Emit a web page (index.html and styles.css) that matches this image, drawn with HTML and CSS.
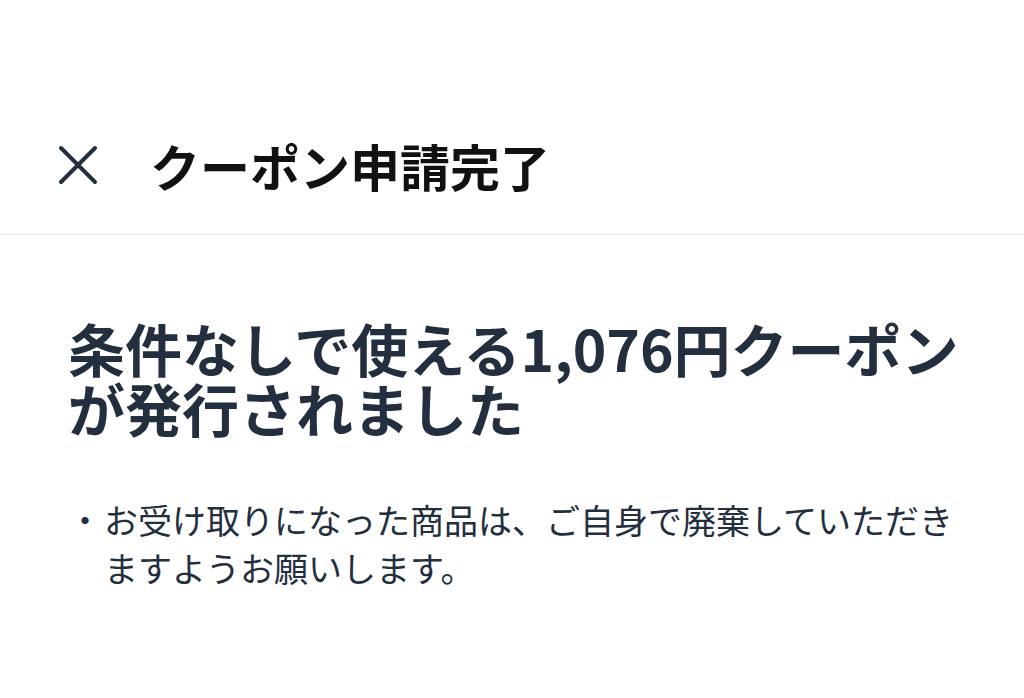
FILE: index.html
```html
<!DOCTYPE html>
<html lang="ja">
<head>
    <meta charset="UTF-8">
    <meta name="viewport" content="width=device-width, initial-scale=1.0">
    <title>クーポン申請完了</title>
    <link rel="stylesheet" href="styles.css">
</head>
<body>

    <header class="top-bar">
        <button class="close-btn" aria-label="閉じる">
            <svg width="40" height="40" viewBox="0 0 40 40">
                <path d="M3 3 L37 37 M37 3 L3 37" stroke="#232f3e" stroke-width="4" stroke-linecap="round" fill="none"/>
            </svg>
        </button>
        <h1 class="title">クーポン申請完了</h1>
    </header>

    <main class="content">
        <h2 class="headline">条件なしで使える1,076円クーポンが発行されました</h2>

        <ul class="notes">
            <li>お受け取りになった商品は、ご自身で廃棄していただきますようお願いします。</li>
        </ul>
    </main>

</body>
</html>
```

FILE: styles.css
```css
body {
    margin: 0;
    background-color: #fff;
    font-family: "Noto Sans CJK JP", "Noto Sans", sans-serif;
    color: #232f3e;
}
.top-bar {
    display: flex;
    align-items: center;
    padding: 135px 0 39px 58px;
    border-bottom: 1px solid #e3e3e3;
}
.close-btn {
    display: flex;
    padding: 0;
    border: none;
    background: none;
    width: 40px;
    height: 40px;
    margin-right: 52px;
}
.title {
    margin: 0;
    font-size: 50px;
    line-height: 60px;
    font-weight: bold;
    color: #111;
}
.content {
    padding: 0 40px 0 68px;
}
.headline {
    margin: 82px 0 0;
    font-size: 57px;
    line-height: 60px;
    font-weight: bold;
}
.notes {
    list-style: none;
    margin: 59px 0 0;
    padding: 0 0 0 36px;
}
.notes li {
    position: relative;
    font-size: 34px;
    line-height: 48px;
}
/* 中黒の箇条書き */
.notes li::before {
    content: "・";
    position: absolute;
    left: -36px;
    top: 0;
}
```
